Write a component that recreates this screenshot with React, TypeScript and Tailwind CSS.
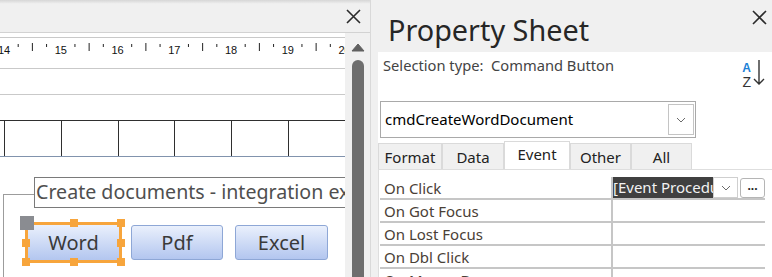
import React from "react";

const rows = ["On Click", "On Got Focus", "On Lost Focus", "On Dbl Click", "On Mouse Down"];
const tabs = [
    { name: "Format", w: "w-[64px]" },
    { name: "Data", w: "w-[62px]" },
    { name: "Event", w: "w-[66px]" },
    { name: "Other", w: "w-[61px]" },
    { name: "All", w: "w-[61px]" },
];

function CloseIcon() {
    return (
        <svg width="15" height="15" viewBox="0 0 15 15" className="shrink-0">
            <path d="M1 1 L14 14 M14 1 L1 14" stroke="#2b2b2b" strokeWidth="1.6" />
        </svg>
    );
}

function Chevron() {
    return (
        <svg width="10" height="6" viewBox="0 0 10 6">
            <path d="M1 1 L5 5 L9 1" fill="none" stroke="#6a6a6a" strokeWidth="1" />
        </svg>
    );
}

function Ruler() {
    const step = 56.75;
    const nums = [14, 15, 16, 17, 18, 19, 20];
    return (
        <svg width="345" height="30" viewBox="0 0 345 30">
            {nums.map((n, i) => {
                const x = 4 + i * step;
                return (
                    <g key={n}>
                        <text
                            x={x}
                            y="16"
                            textAnchor="middle"
                            fontSize="11"
                            fontFamily="'Liberation Sans', Arial, sans-serif"
                            fill="#111"
                        >
                            {n}
                        </text>
                        {i < nums.length - 1 && (
                            <>
                                <line x1={x + step * 0.25} y1="6" x2={x + step * 0.25} y2="9" stroke="#222" />
                                <line x1={x + step * 0.5} y1="5" x2={x + step * 0.5} y2="13" stroke="#222" />
                                <line x1={x + step * 0.75} y1="6" x2={x + step * 0.75} y2="9" stroke="#222" />
                            </>
                        )}
                    </g>
                );
            })}
        </svg>
    );
}

const btn =
    "flex items-center justify-center text-[20px] text-[#3a3a3a] bg-gradient-to-b from-[#eaf0fc] to-[#b3c6ef]";

export default function App() {
    return (
        <div className="flex h-[277px] w-[772px] overflow-hidden bg-[#f0f0f0] font-['Noto_Sans',sans-serif]">
            {/* design surface */}
            <div className="flex w-[371px] shrink-0 flex-col border-r border-[#d9d9d9]">
                <div className="flex h-[33px] shrink-0 items-start justify-end border-b border-[#d2d2d2] bg-gradient-to-b from-[#d6d6d6] via-[#f0f0f0] via-[12%] to-[#f0f0f0] pr-[9px] pt-[9px]">
                    <CloseIcon />
                </div>
                <div className="flex min-h-0 flex-1">
                    <div className="flex w-[345px] shrink-0 flex-col overflow-hidden bg-white">
                        <div className="h-[4px] shrink-0" />
                        <div className="h-[31px] shrink-0 border-t border-[#c9c9c9]">
                            <Ruler />
                        </div>
                        <div className="h-[26px] shrink-0 border-t border-[#c9c9c9]" />
                        <div className="h-[26px] shrink-0 border-t border-[#c9c9c9]" />
                        <div className="flex h-[37px] shrink-0 border-t border-b border-t-[#2f2f2f] border-b-[#8193ad]">
                            <div className="w-[4px] shrink-0" />
                            {[0, 1, 2, 3, 4, 5, 6].map((i) => (
                                <div key={i} className="w-[56.75px] shrink-0 border-l border-[#2f2f2f]" />
                            ))}
                        </div>
                        <div className="relative flex flex-1 flex-col pl-[34px] pt-[20px]">
                            <div className="absolute bottom-0 left-[3px] top-[37px] w-[31px] border-l border-t border-[#9c9c9c]" />
                            <div className="relative h-[31px] w-[420px] shrink-0 overflow-hidden whitespace-nowrap border border-[#7a7a7a] bg-white pl-[1px] text-[19.6px] leading-[28px] text-[#4f4f4f]">
                                Create documents - integration examples
                            </div>
                            <div className="ml-[-9px] mt-[14px] flex items-start">
                                <div className="relative h-[41px] w-[97px] shrink-0 border-[3px] border-[#f7a53c]">
                                    <div className={`${btn} h-full w-full`}>Word</div>
                                    <span className="absolute -left-[6px] -top-[6px] h-[8px] w-[8px] bg-[#f7a53c]" />
                                    <span className="absolute -top-[6px] left-1/2 h-[8px] w-[8px] -translate-x-1/2 bg-[#f7a53c]" />
                                    <span className="absolute -right-[6px] -top-[6px] h-[8px] w-[8px] bg-[#f7a53c]" />
                                    <span className="absolute -left-[6px] top-1/2 h-[8px] w-[8px] -translate-y-1/2 bg-[#f7a53c]" />
                                    <span className="absolute -right-[6px] top-1/2 h-[8px] w-[8px] -translate-y-1/2 bg-[#f7a53c]" />
                                    <span className="absolute -bottom-[6px] -left-[6px] h-[8px] w-[8px] bg-[#f7a53c]" />
                                    <span className="absolute -bottom-[6px] left-1/2 h-[8px] w-[8px] -translate-x-1/2 bg-[#f7a53c]" />
                                    <span className="absolute -bottom-[6px] -right-[6px] h-[8px] w-[8px] bg-[#f7a53c]" />
                                    <span className="absolute -left-[8px] -top-[9px] h-[14px] w-[14px] bg-[#8a8c91]" />
                                </div>
                                <div className={`${btn} ml-[9px] mt-[3px] h-[35px] w-[92px] shrink-0 rounded-[3px] border border-[#8ea7d6]`}>
                                    Pdf
                                </div>
                                <div className={`${btn} ml-[12px] mt-[3px] h-[35px] w-[93px] shrink-0 rounded-[3px] border border-[#8ea7d6]`}>
                                    Excel
                                </div>
                            </div>
                        </div>
                    </div>
                    {/* scrollbar */}
                    <div className="flex w-[25px] flex-col items-center bg-[#f0f0f0] pt-[10px]">
                        <svg width="14" height="9" viewBox="0 0 14 9">
                            <path d="M7 1 L13 8 L1 8 Z" fill="#606060" stroke="#606060" strokeLinejoin="round" />
                        </svg>
                        <div className="mt-[8px] w-[12px] flex-1 rounded-t-full bg-[#6e6e6e]" />
                    </div>
                </div>
            </div>

            {/* property sheet */}
            <div className="flex min-w-0 flex-1 flex-col">
                <div className="flex h-[52px] shrink-0 items-start justify-between">
                    <div className="pl-[17px] pt-[15px] text-[28.8px] leading-[29px] text-[#262626]">Property Sheet</div>
                    <div className="mr-[5px] mt-[10px]">
                        <CloseIcon />
                    </div>
                </div>
                <div className="ml-[7px] flex min-h-0 flex-1 flex-col bg-white">
                    <div className="flex h-[49px] shrink-0 items-start justify-between">
                        <div className="pl-[5px] pt-[3px] text-[14.7px] leading-[20px] text-[#444]">
                            Selection type:&nbsp; Command Button
                        </div>
                        <div className="mr-[7px] mt-[8px] flex items-start gap-[2px]">
                            <div className="mt-[2px] flex flex-col items-center font-['Liberation_Sans',sans-serif] leading-none">
                                <span className="text-[12px] font-bold text-[#1c7fd6]">A</span>
                                <span className="mt-[1px] text-[14px] text-[#333]">Z</span>
                            </div>
                            <svg width="12" height="26" viewBox="0 0 12 26">
                                <path d="M6 0 L6 24 M1 19 L6 24 L11 19" fill="none" stroke="#333" strokeWidth="1.4" />
                            </svg>
                        </div>
                    </div>
                    <div className="ml-[2px] flex h-[37px] w-[316px] shrink-0 items-center justify-between border border-[#a9a9a9]">
                        <span className="pl-[4px] text-[15px] text-black">cmdCreateWordDocument</span>
                        <div className="mr-[1px] flex h-[31px] w-[26px] items-center justify-center border border-[#c4c4c4]">
                            <Chevron />
                        </div>
                    </div>
                    <div className="mt-[3px] flex h-[28px] shrink-0 items-end">
                        {tabs.map((t) => (
                            <div
                                key={t.name}
                                className={`${t.w} flex shrink-0 items-center justify-center border border-b-0 border-[#dadada] text-[15px] text-[#222] ${
                                    t.name === "Event" ? "h-[28px] bg-white pb-[3px]" : "h-[26px] bg-[#f0f0f0] pt-[1px]"
                                }`}
                            >
                                {t.name}
                            </div>
                        ))}
                    </div>
                    <div className="flex-1 border-l border-t border-[#dedede] pl-[1px] pt-[7px]">
                        {rows.map((r, i) => (
                            <div key={r} className="flex h-[23px] w-[385px] border-b-2 border-[#c6c6c6]">
                                <div className="w-[233px] shrink-0 overflow-hidden whitespace-nowrap border-r-2 border-[#c6c6c6] pl-[4px] text-[15px] leading-[22px] text-[#4a4036]">
                                    {r}
                                </div>
                                {i === 0 && (
                                    <div className="flex items-start">
                                        <div className="h-[21px] w-[100px] overflow-hidden whitespace-nowrap bg-[#404040] text-[15px] leading-[21px] text-[#f2f2f2]">
                                            [Event Procedure]
                                        </div>
                                        <div className="flex h-[21px] w-[25px] items-center justify-center border border-[#cfcfcf] bg-white">
                                            <Chevron />
                                        </div>
                                        <div className="ml-[2px] mt-[1px] flex h-[20px] w-[25px] items-center justify-center rounded-[3px] border border-[#b5b5b5] bg-white pb-[4px] text-[12px] font-bold leading-none text-[#222]">
                                            ...
                                        </div>
                                    </div>
                                )}
                            </div>
                        ))}
                    </div>
                </div>
            </div>
        </div>
    );
}
